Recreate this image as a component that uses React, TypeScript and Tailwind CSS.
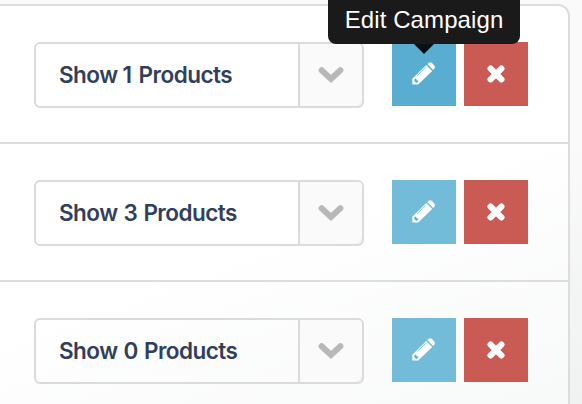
const rows = [
    { id: 1, digit: "1", active: true, gap: "ml-[5px] mr-[7px]" },
    { id: 2, digit: "3", active: false, gap: "ml-[6px] mr-[6px]" },
    { id: 3, digit: "0", active: false, gap: "ml-[6px] mr-[6px]" },
];

function PencilIcon() {
    return (
        <svg viewBox="0 0 24 24" className="w-6 h-6 mt-px mb-0.5" fill="currentColor">
            <path d="M0.3 16.8L14.2 3L20.2 9L6.2 22.6H0.3z" />
            <path d="M15.3 2.1L16.8 0.8Q18.4 -0.3 20 1.1L22.2 3.4Q23.6 5 22.4 6.6L21.2 8z" />
            <path d="M5.2 13.6L13.6 5.3" className="stroke-[#72bbd9]" strokeWidth="0.9" fill="none" />
            <path d="M2.3 17.3L4.1 16.6L4.5 18.2L6.2 18.5L5.6 20.3L4.2 20.9L2.4 19z" className="fill-[#58add1]" />
        </svg>
    );
}

function CloseIcon() {
    return (
        <svg viewBox="0 0 18 18" className="w-[18px] h-[18px]" fill="none" stroke="currentColor" strokeWidth="6.2" strokeLinecap="round">
            <path d="M3.6 3.6l10.8 10.8M14.4 3.6l-10.8 10.8" />
        </svg>
    );
}

function ChevronIcon() {
    return (
        <svg viewBox="0 0 26 18" className="w-[26px] h-[18px] mr-px" fill="none" stroke="currentColor" strokeWidth="6" strokeLinecap="round">
            <path d="M3.6 4.2l9.4 8.8l9.4 -8.8" />
        </svg>
    );
}

export default function App() {
    return (
        <main className="w-[582px] h-[404px] overflow-hidden pt-1 bg-[linear-gradient(160deg,#fafafa_55%,#f0f1f1_100%)]">
            <section className="w-[570px] h-[420px] border-t-2 border-r-2 border-[#dddddd] rounded-tr-[12px] bg-[linear-gradient(160deg,#ffffff_52%,#f7f8f8_100%)]">
                {rows.map((row) => (
                    <div key={row.id} className="flex items-start h-[138px] pt-9 pl-[34px] border-b-2 border-[#dddddd]">
                        <div className="flex w-[330px] h-[66px] border-2 border-[#dbdbdb] rounded-md overflow-hidden">
                            <div className="flex items-center w-[262px] pl-[23px] font-['Inter','Liberation_Sans',sans-serif] font-semibold text-[22.5px] tracking-[-0.52px] text-[#323f5b] whitespace-nowrap">
                                <span>Show</span>
                                <span className={row.gap}>{row.digit}</span>
                                <span>Products</span>
                            </div>
                            <div className="flex items-center justify-center flex-1 border-l-2 border-[#dbdbdb] bg-[#dbdbdb]/40">
                                <div className="flex items-center justify-center w-full h-full rounded-br-[8px] bg-[#fafafa] text-[#b8b8b8]">
                                    <ChevronIcon />
                                </div>
                            </div>
                        </div>
                        <div className="flex gap-2 ml-7 text-white">
                            <div className={`relative flex items-center justify-center w-16 h-16 ${row.active ? "bg-[#58add1]" : "bg-[#72bbd9]"}`}>
                                <PencilIcon />
                                {row.active && (
                                    <div className="absolute left-1/2 bottom-[62px] -translate-x-1/2 flex justify-center w-48 h-[54px] pt-[15px] rounded-lg bg-[#1a1a1a] font-['Liberation_Sans',sans-serif] text-[24px] leading-[30px] tracking-[0.1px] whitespace-nowrap">
                                        Edit Campaign
                                        <div className="absolute top-full left-1/2 -translate-x-1/2 border-x-[10px] border-t-[10px] border-x-transparent border-t-[#091116]" />
                                    </div>
                                )}
                            </div>
                            <div className="flex items-center justify-center w-16 h-16 bg-[#c95b54]">
                                <CloseIcon />
                            </div>
                        </div>
                    </div>
                ))}
            </section>
        </main>
    );
}
